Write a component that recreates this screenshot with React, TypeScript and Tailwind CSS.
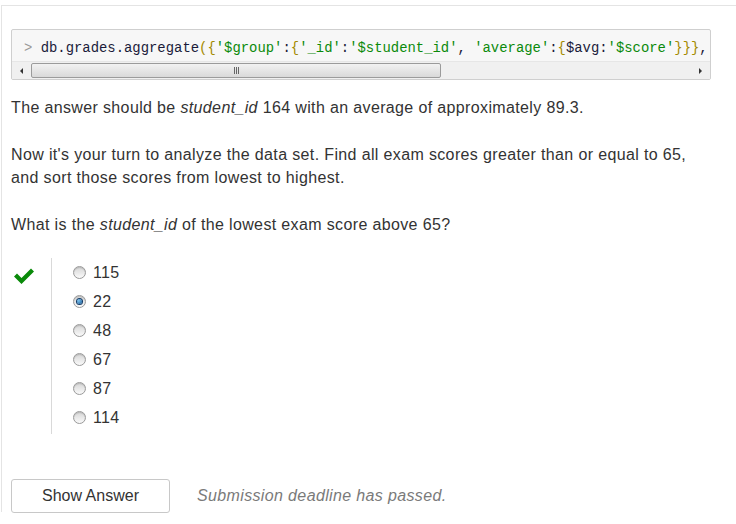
import React from "react";

const options = ["115", "22", "48", "67", "87", "114"];

// one token of the highlighted mongo shell line
const Tok = ({ c, children }: { c: "s" | "p" | "t"; children: React.ReactNode }) => (
  <span className={c === "s" ? "text-[#0b8a0b]" : c === "p" ? "text-[#a38a00]" : "text-[#1b1b3a]"}>
    {children}
  </span>
);

const Radio = ({ checked }: { checked?: boolean }) => (
  <span className="relative inline-block w-[13px] h-[13px] rounded-full border border-[#9a9a9a] bg-gradient-to-b from-[#d6d6d6] to-[#fafafa] shadow-[inset_0_1px_1px_rgba(0,0,0,0.15)]">
    {checked && (
      <span className="absolute left-[3px] top-[3px] w-[5px] h-[5px] rounded-full bg-[radial-gradient(circle_at_35%_35%,#7cc4f0,#0d4f8f)] ring-1 ring-[#123a66]" />
    )}
  </span>
);

export default function App() {
  return (
    <div className="w-[736px] h-[524px] bg-white font-['Liberation_Sans',Arial,sans-serif] text-[#333] overflow-hidden">
      <div className="mt-[5px] ml-[1px] h-[507px] border-l border-t border-[#e4e4e4] pl-[9px] pt-[23px]">
        {/* code sample with horizontal scroll */}
        <div className="w-[700px] rounded-[2px] border border-[#cfcfcf] bg-[#f7f7f7] overflow-hidden">
          <div className="h-[31px] pt-[8px] pl-[12px] whitespace-nowrap overflow-hidden font-['Liberation_Mono',monospace] text-[13.9px] leading-[20px]">
            <span className="text-[#9a9a9a]">&gt; </span>
            <Tok c="t">db.grades.aggregate</Tok>
            <Tok c="p">({"{"}</Tok>
            <Tok c="s">'$group'</Tok>
            <Tok c="t">:</Tok>
            <Tok c="p">{"{"}</Tok>
            <Tok c="s">'_id'</Tok>
            <Tok c="t">:</Tok>
            <Tok c="s">'$student_id'</Tok>
            <Tok c="t">, </Tok>
            <Tok c="s">'average'</Tok>
            <Tok c="t">:</Tok>
            <Tok c="p">{"{"}</Tok>
            <Tok c="t">$avg:</Tok>
            <Tok c="s">'$score'</Tok>
            <Tok c="p">{"}}}"}</Tok>
            <Tok c="t">,</Tok>
          </div>
          <div className="h-[18px] flex items-center bg-[#f0f0f0] border-t border-[#e6e6e6]">
            <span className="w-[19px] flex justify-center">
              <span className="w-0 h-0 border-y-[3px] border-y-transparent border-r-[3px] border-r-[#333]" />
            </span>
            <div className="w-[410px] h-[15px] rounded-[2px] border border-[#9b9b9b] bg-gradient-to-b from-[#f2f2f2] to-[#d9d9d9] flex items-center justify-center">
              <span className="flex gap-[1px]">
                <span className="w-[1px] h-[7px] bg-[#666]" />
                <span className="w-[1px] h-[7px] bg-[#666]" />
                <span className="w-[1px] h-[7px] bg-[#666]" />
              </span>
            </div>
            <div className="flex-1" />
            <span className="w-[19px] flex justify-center">
              <span className="w-0 h-0 border-y-[3px] border-y-transparent border-l-[3px] border-l-[#333]" />
            </span>
          </div>
        </div>

        <div className="text-[16px] leading-[23px] tracking-[0.36px]">
          <p className="mt-[16px]">
            The answer should be <em>student_id</em> 164 with an average of approximately 89.3.
          </p>
          <p className="mt-[24px]">
            Now it's your turn to analyze the data set. Find all exam scores greater than or equal to 65,
            <br />
            and sort those scores from lowest to highest.
          </p>
          <p className="mt-[24px]">
            What is the <em>student_id</em> of the lowest exam score above 65?
          </p>
        </div>

        {/* answer choices */}
        <div className="mt-[22px] flex">
          <div className="w-[40px] pt-[9px] pl-[2px]">
            <svg width="22" height="17" viewBox="0 0 22 17">
              <path d="M1 9.5 L4 6.5 L8.5 11 L18 1.5 L21 4.5 L8.5 17 Z" fill="#0a8a0a" />
            </svg>
          </div>
          <div className="border-l border-[#d9d9d9] pl-[21px] pb-[2px]">
            {options.map((o) => (
              <label key={o} className="h-[29px] flex items-center gap-[7px] text-[16px] tracking-[0.3px]">
                <Radio checked={o === "22"} />
                <span>{o}</span>
              </label>
            ))}
          </div>
        </div>

        <div className="mt-[45px] flex items-center">
          <button className="w-[159px] h-[34px] rounded-[3px] border border-[#c8c8c8] bg-white text-[16px] text-[#333]">
            Show Answer
          </button>
          <span className="ml-[27px] italic text-[16px] tracking-[0.36px] text-[#7a7a7a]">
            Submission deadline has passed.
          </span>
        </div>
      </div>
    </div>
  );
}
